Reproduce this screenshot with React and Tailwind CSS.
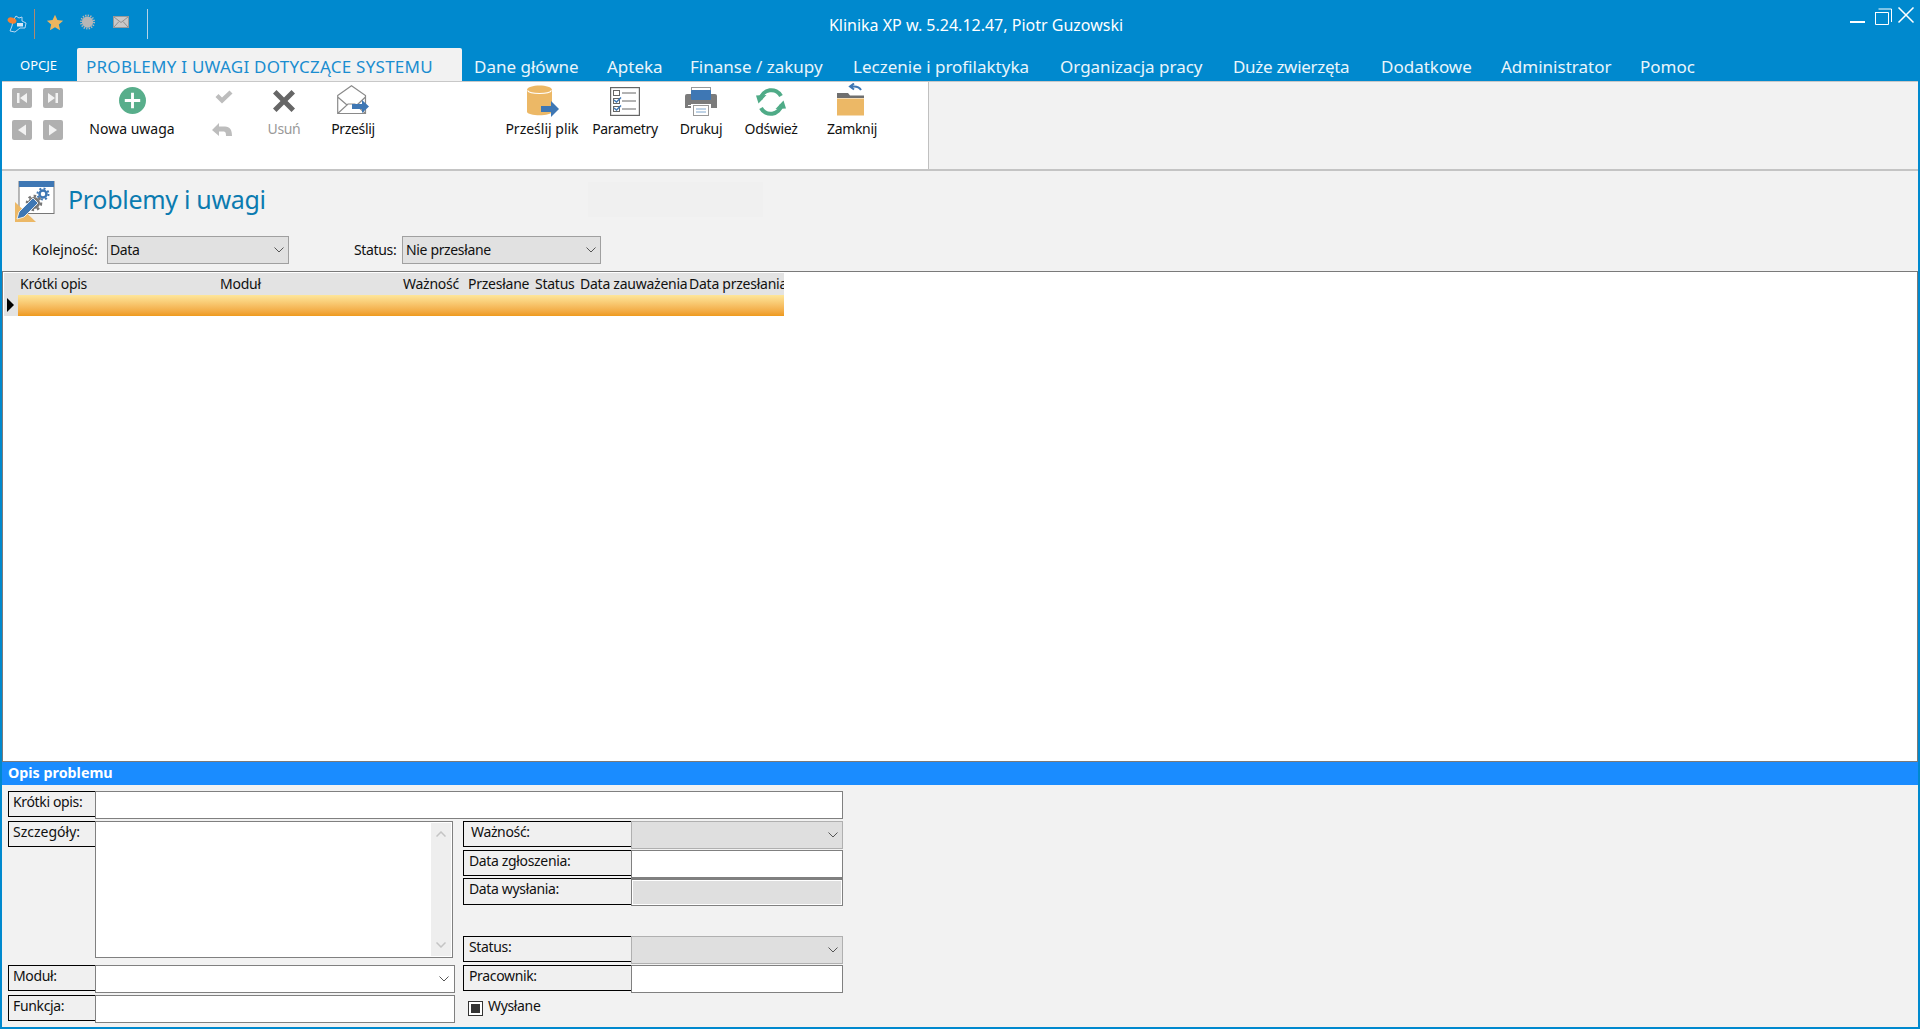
import React from "react";

const Chevron = ({ className = "" }) => (
  <svg viewBox="0 0 10 6" className={"w-[10px] h-[6px] " + className}>
    <path d="M0.5 0.5 L5 5 L9.5 0.5" fill="none" stroke="#555" strokeWidth="1" />
  </svg>
);

const Label = ({ className = "", children, w = "w-[88px]", pl = "pl-[4px]" }) => (
  <div className={"absolute h-[26px] border border-r-0 border-black bg-[#f0f0f0] text-[14px] leading-[20px] text-[#111] " + w + " " + pl + " " + className}>
    {children}
  </div>
);

const Box = ({ className = "" }) => <div className={"absolute h-[28px] border border-[#808080] bg-white " + className} />;

const NavSquare = ({ className = "", d }) => (
  <svg viewBox="0 0 20 20" className={"absolute w-[20px] h-[20px] " + className}>
    <rect width="20" height="20" rx="2" fill="#b0b0b0" />
    <path d={d} fill="#f2f2f2" />
  </svg>
);

const RibbonLabel = ({ left, gray, wide, children }) => (
  <span className={"absolute top-[37px] w-[100px] text-center text-[14px] leading-[20px] whitespace-nowrap " + left + " " + (gray ? "text-[#999]" : "text-[#111]") + (wide ? " tracking-[0px]" : "")}>
    {children}
  </span>
);

const menu = [
  ["Dane główne", "w-[133px]"],
  ["Apteka", "w-[83px]"],
  ["Finanse / zakupy", "w-[163px]"],
  ["Leczenie i profilaktyka", "w-[207px]"],
  ["Organizacja pracy", "w-[173px]"],
  ["Duże zwierzęta", "w-[148px] tracking-[-0.3px]"],
  ["Dodatkowe", "w-[120px]"],
  ["Administrator", "w-[139px]"],
  ["Pomoc", "w-[80px]"],
];

const columns = [
  ["Krótki opis", "w-[200px]"],
  ["Moduł", "w-[183px]"],
  ["Ważność", "w-[65px]"],
  ["Przesłane", "w-[67px]"],
  ["Status", "w-[45px]"],
  ["Data zauważenia", "w-[109px]"],
  ["Data przesłania", "w-[97px]"],
];

export default function App() {
  return (
    <div className="relative w-full h-screen overflow-hidden bg-[#0089ce] font-['Noto_Sans',sans-serif] tracking-[-0.35px]">
      {/* pasek tytulu */}
      <svg viewBox="0 0 20 18" className="absolute left-[7px] top-[15px] w-[20px] h-[18px]">
        <path d="M6 6 L9 1 L12 3 L15 2 L15 6 L19 8 L18 13 L13 13 L8 17 L3 16 L5 11 Z" fill="none" stroke="#b9d7f2" strokeWidth="1" />
        <rect x="10" y="8" width="6" height="3.5" fill="#d9e9f8" />
        <ellipse cx="5" cy="5.5" rx="4.5" ry="3" fill="#f58233" transform="rotate(20 5 5.5)" />
      </svg>
      <div className="absolute left-[34px] top-[9px] w-px h-[30px] bg-[#b08a70]" />
      <svg viewBox="0 0 24 24" className="absolute left-[46px] top-[14px] w-[18px] h-[17px]">
        <path d="M12 1 L15.4 8.6 L23.5 9.4 L17.4 14.8 L19.2 23 L12 18.7 L4.8 23 L6.6 14.8 L0.5 9.4 L8.6 8.6 Z" fill="#ecb55e" />
      </svg>
      <svg viewBox="0 0 16 16" className="absolute left-[80px] top-[14px] w-[15px] h-[16px]">
        <circle cx="8" cy="8" r="6" fill="#b6b6b6" />
        <circle cx="8" cy="8" r="7" fill="none" stroke="#b6b6b6" strokeWidth="2" strokeDasharray="1.4 1.35" />
      </svg>
      <svg viewBox="0 0 16 12" className="absolute left-[113px] top-[16px] w-[16px] h-[12px]">
        <rect x=".5" y=".5" width="15" height="11" fill="#c8c8c8" stroke="#999" />
        <path d="M1 1 L8 6.5 L15 1 M1 11 L6 5.5 M15 11 L10 5.5" fill="none" stroke="#8f8f8f" />
      </svg>
      <div className="absolute left-[147px] top-[9px] w-px h-[30px] bg-[#b5d3e6]" />

      <div className="absolute left-[800px] top-[14px] w-[352px] text-center text-[16px] leading-[22px] tracking-[0px] text-white whitespace-nowrap">
        Klinika XP w. 5.24.12.47, Piotr Guzowski
      </div>

      <svg viewBox="0 0 66 18" className="absolute left-[1850px] top-[7px] w-[66px] h-[18px]">
        <rect x="0" y="14" width="15" height="2" fill="#fff" />
        <path d="M28.5 2 H41.5 V15 M25 5.5 H38.5 V17.5 H25.5 V5.5" fill="none" stroke="#fff" strokeWidth="1" />
        <path d="M48.5 0.5 L63.5 15.5 M63.5 0.5 L48.5 15.5" stroke="#fff" strokeWidth="1.5" />
      </svg>

      {/* zakladki */}
      <div className="absolute left-0 top-[48px] flex h-[33px] items-stretch text-white">
        <div className="w-[77px] pt-[6px] text-center text-[13px] leading-[22px] tracking-normal">OPCJE</div>
        <div className="w-[385px] rounded-t-[2px] bg-[#f2f2f2] pl-[9px] pt-[7px] text-[17px] leading-[24px] text-[#1a8dd0] whitespace-nowrap tracking-[0.25px]">
          PROBLEMY I UWAGI DOTYCZĄCE SYSTEMU
        </div>
        <div className="flex pl-[12px] pt-[7px] text-[17px] leading-[24px] tracking-[0px] text-[#eaf5fb]">
          {menu.map(([name, width]) => (
            <span key={name} className={width + " whitespace-nowrap"}>{name}</span>
          ))}
        </div>
      </div>

      {/* ribbon */}
      <div className="absolute left-[2px] right-[2px] top-[81px] h-[946px] bg-[#f2f2f2]">
        <div className="absolute left-0 top-0 right-0 h-px bg-[#c8c8c8]" />
      </div>
      <div className="absolute left-0 top-[82px] w-[928px] h-[87px]">
        <div className="absolute left-[2px] top-0 w-[926px] h-[87px] bg-white" />
        <NavSquare className="left-[12px] top-[6px]" d="M5 5 H7.5 V15 H5 Z M15 5 V15 L8 10 Z" />
        <NavSquare className="left-[43px] top-[6px]" d="M5 5 V15 L12 10 Z M12.5 5 H15 V15 H12.5 Z" />
        <NavSquare className="left-[12px] top-[38px]" d="M14 4.5 V15.5 L6 10 Z" />
        <NavSquare className="left-[43px] top-[38px]" d="M6 4.5 V15.5 L14 10 Z" />

        <svg viewBox="0 0 28 28" className="absolute left-[119px] top-[5px] w-[27px] h-[27px]">
          <circle cx="14" cy="14" r="14" fill="#58ae8b" />
          <path d="M12.5 6 H15.5 V12.5 H22 V15.5 H15.5 V22 H12.5 V15.5 H6 V12.5 H12.5 Z" fill="#fff" />
        </svg>
        <RibbonLabel left="left-[82px]" wide>Nowa uwaga</RibbonLabel>

        <svg viewBox="0 0 18 14" className="absolute left-[215px] top-[8px] w-[18px] h-[14px]">
          <path d="M0.5 7 L3.5 4 L7 7.5 L14.5 0.5 L17.5 3.5 L7 13.5 Z" fill="#bdbdbd" />
        </svg>
        <svg viewBox="0 0 20 14" className="absolute left-[212px] top-[40px] w-[20px] h-[14px]">
          <path d="M0 8 L7 1 V4.5 H13 C18 4.5 20 8 20 14 H14 C14 10.5 13.5 9.5 11 9.5 H7 V14 Z" fill="#bdbdbd" />
        </svg>
        <svg viewBox="0 0 22 22" className="absolute left-[273px] top-[8px] w-[22px] h-[22px]">
          <path d="M3.5 0 L11 7.5 L18.5 0 L22 3.5 L14.5 11 L22 18.5 L18.5 22 L11 14.5 L3.5 22 L0 18.5 L7.5 11 L0 3.5 Z" fill="#666" />
        </svg>
        <RibbonLabel left="left-[234px]" gray>Usuń</RibbonLabel>

        <svg viewBox="0 0 32 30" className="absolute left-[337px] top-[3px] w-[32px] h-[30px]">
          <path d="M0.7 10.5 L14.5 0.8 L28.5 10.5 V28.5 H0.7 Z M0.7 12 L10 20 M28.5 12 L20 20 M0.7 28.5 L11 19 H18 L28.5 28.5" fill="#fff" stroke="#8a8a8a" strokeWidth="1.2" />
          <path d="M15 19 H25 V15 L32 21.5 L25 28 V24 H15 Z" fill="#3e77b4" />
        </svg>
        <RibbonLabel left="left-[303px]">Prześlij</RibbonLabel>

        <svg viewBox="0 0 32 32" className="absolute left-[527px] top-[3px] w-[32px] h-[32px]">
          <path d="M0 5 C0 -1 25 -1 25 5 V26.5 C25 31.5 0 31.5 0 26.5 Z" fill="#ecb866" />
          <path d="M0.5 5.5 C3 9.5 22 9.5 24.5 5.5" fill="none" stroke="#fff" strokeWidth="1.2" />
          <path d="M14 21 H24 V16 L32 24 L24 32 V27 H14 Z" fill="#3e77b4" />
        </svg>
        <RibbonLabel left="left-[492px]" wide>Prześlij plik</RibbonLabel>

        <svg viewBox="0 0 30 29" className="absolute left-[610px] top-[5px] w-[30px] h-[29px]">
          <rect x=".6" y=".6" width="28.8" height="27.8" fill="#fff" stroke="#666" strokeWidth="1.2" />
          <rect x="3.5" y="3.5" width="6" height="5" fill="none" stroke="#666" />
          <rect x="3.5" y="11.5" width="6" height="5" fill="none" stroke="#666" />
          <rect x="3.5" y="19.5" width="6" height="5" fill="none" stroke="#666" />
          <path d="M4 13 L6.5 15 L11 10.5 M4 21 L6.5 23 L11 18.5" fill="none" stroke="#3e77b4" strokeWidth="1.5" />
          <path d="M12 6 H26 M12 14 H26 M12 22 H26" stroke="#666" strokeWidth="1" />
        </svg>
        <RibbonLabel left="left-[575px]">Parametry</RibbonLabel>

        <svg viewBox="0 0 32 29" className="absolute left-[685px] top-[5px] w-[32px] h-[29px]">
          <rect x="6.5" y=".5" width="19" height="10" fill="#fff" stroke="#999" />
          <path d="M2 7 H30 Q32 7 32 9 V21 H26 V17 H6 V21 H0 V9 Q0 7 2 7 Z" fill="#7b7b7b" />
          <rect x="6" y="3" width="20" height="10" rx="1" fill="#3e77b4" />
          <rect x="3" y="18" width="3" height="1" fill="#fff" />
          <rect x="8.5" y="18.5" width="15" height="10" fill="#fff" stroke="#999" />
          <path d="M11 22 H21 M11 25 H21" stroke="#7fa6cc" />
        </svg>
        <RibbonLabel left="left-[651px]">Drukuj</RibbonLabel>

        <svg viewBox="0 0 30 28" className="absolute left-[756px] top-[6px] w-[30px] h-[28px]">
          <path d="M4.5 11 A11 11 0 0 1 25 8 M25.5 17 A11 11 0 0 1 5 20" fill="none" stroke="#4fab87" strokeWidth="4" />
          <path d="M0 7.5 L10.5 7 L2.5 15.5 Z M30 20.5 L19.5 21 L27.5 12.5 Z" fill="#4fab87" />
        </svg>
        <RibbonLabel left="left-[721px]">Odśwież</RibbonLabel>

        <svg viewBox="0 0 30 33" className="absolute left-[837px] top-[1px] w-[30px] h-[33px]">
          <path d="M0 10 H11 L13 12.5 H27 V15 H0 Z" fill="#6f6f6f" />
          <rect x="0" y="15.5" width="27" height="17" fill="#ecb866" />
          <path d="M24 7 Q22 3.5 17 3.5 H13 M17 0.5 L13 3.5 L17 6.5" fill="none" stroke="#3e77b4" strokeWidth="2" />
        </svg>
        <RibbonLabel left="left-[802px]">Zamknij</RibbonLabel>
      </div>
      <div className="absolute left-[928px] top-[82px] w-px h-[87px] bg-[#c0c0c0]" />
      <div className="absolute left-[2px] right-[2px] top-[169px] h-[2px] bg-[#c4c4c4]" />

      {/* naglowek */}
      <svg viewBox="0 0 40 41" className="absolute left-[15px] top-[181px] w-[40px] h-[41px]">
        <rect x="4" y="0.5" width="35" height="32" fill="#fff" stroke="#777" strokeWidth="1" />
        <rect x="4" y="0" width="35" height="6" fill="#3e77b4" />
        <circle cx="28" cy="13" r="3.5" fill="none" stroke="#3e77b4" strokeWidth="2.5" />
        <circle cx="28" cy="13" r="5.5" fill="none" stroke="#3e77b4" strokeWidth="2" strokeDasharray="2 2.3" />
        <circle cx="19" cy="22" r="4.5" fill="none" stroke="#777" strokeWidth="3" />
        <circle cx="19" cy="22" r="7" fill="none" stroke="#777" strokeWidth="2.5" strokeDasharray="2.5 2.9" />
        <path d="M0 21 L21 41 H0 Z" fill="#ecb866" />
        <path d="M2 38 L4 31 L18 17 L23 22 L9 36 Z" fill="#3e77b4" stroke="#fff" strokeWidth=".8" />
      </svg>
      <div className="absolute left-[68px] top-[182px] text-[25px] leading-[34px] text-[#0b7bb0] tracking-[-0.3px]">Problemy i uwagi</div>
      <div className="absolute left-[588px] top-[182px] w-[175px] h-[35px] bg-[#f0f0f0]" />

      {/* filtry */}
      <span className="absolute left-[32px] top-[240px] text-[14px] leading-[20px] tracking-[-0.1px] text-[#111]">Kolejność:</span>
      <div className="absolute left-[107px] top-[236px] flex h-[28px] w-[182px] items-center justify-between border border-[#a0a0a0] bg-[#e1e1e1] pb-px pl-[2px] pr-[4px] text-[14px] text-[#111]">
        <span>Data</span>
        <Chevron />
      </div>
      <span className="absolute left-[354px] top-[240px] text-[14px] leading-[20px] text-[#111]">Status:</span>
      <div className="absolute left-[402px] top-[236px] flex h-[28px] w-[199px] items-center justify-between border border-[#a0a0a0] bg-[#e1e1e1] pb-px pl-[3px] pr-[4px] text-[14px] text-[#111]">
        <span>Nie przesłane</span>
        <Chevron />
      </div>

      {/* tabela */}
      <div className="absolute left-[2px] right-[2px] top-[271px] h-[491px] border border-[#7a7a7a] bg-white">
        <div className="ml-px mt-px flex h-[22px] w-[780px] bg-[#e3e3e3] pl-[14px] pt-px text-[14px] leading-[20px] tracking-[-0.25px] text-[#111]">
          {columns.map(([name, width]) => (
            <div key={name} className={width + " overflow-hidden whitespace-nowrap pl-[2px]"}>{name}</div>
          ))}
        </div>
        <div className="ml-px flex h-[21px] w-[780px] bg-[#e3e3e3]">
          <div className="flex w-[14px] items-center pb-px pl-[3px]">
            <div className="h-0 w-0 border-y-[7px] border-l-[7px] border-y-transparent border-l-black" />
          </div>
          <div className="flex-1 bg-gradient-to-b from-[#fde69a] to-[#ee9a1b]" />
        </div>
      </div>

      {/* opis problemu */}
      <div className="absolute left-[2px] right-[2px] top-[762px] h-[23px] bg-[#1a8cff] pl-[6px] text-[14.3px] font-bold leading-[21px] tracking-normal text-white">
        Opis problemu
      </div>

      <Label className="left-[8px] top-[791px]">Krótki opis:</Label>
      <Box className="left-[95px] top-[791px] w-[748px]" />

      <Label className="left-[8px] top-[821px]"><span className="tracking-[0px]">Szczegóły:</span></Label>
      <div className="absolute left-[95px] top-[821px] h-[137px] w-[358px] border border-[#808080] bg-white">
        <div className="absolute right-px top-px flex h-[133px] w-[20px] flex-col items-center justify-between bg-[#eeeeee] py-[8px]">
          <svg viewBox="0 0 10 6" className="w-[10px] h-[6px]"><path d="M0.5 5.5 L5 1 L9.5 5.5" fill="none" stroke="#c4c4c4" strokeWidth="1.5" /></svg>
          <svg viewBox="0 0 10 6" className="w-[10px] h-[6px]"><path d="M0.5 0.5 L5 5 L9.5 0.5" fill="none" stroke="#c4c4c4" strokeWidth="1.5" /></svg>
        </div>
      </div>

      <Label className="left-[8px] top-[965px]">Moduł:</Label>
      <Box className="left-[95px] top-[965px] w-[360px]" />
      <Chevron className="absolute left-[439px] top-[976px]" />

      <Label className="left-[8px] top-[995px]">Funkcja:</Label>
      <Box className="left-[95px] top-[995px] w-[360px]" />

      <Label className="left-[463px] top-[821px]" w="w-[168px]" pl="pl-[7px]">Ważność:</Label>
      <div className="absolute left-[631px] top-[821px] flex h-[28px] w-[212px] items-center justify-end border border-[#b0b0b0] bg-[#dfdfdf] pr-[4px]">
        <Chevron />
      </div>

      <Label className="left-[463px] top-[850px]" w="w-[168px]" pl="pl-[5px]">Data zgłoszenia:</Label>
      <Box className="left-[631px] top-[850px] w-[212px]" />

      <Label className="left-[463px] top-[878px] h-[27px]" w="w-[168px]" pl="pl-[5px]">Data wysłania:</Label>
      <div className="absolute left-[631px] top-[878px] h-[28px] w-[212px] border border-t-2 border-[#808080] bg-white p-px">
        <div className="h-full bg-[#dfdfdf]" />
      </div>

      <Label className="left-[463px] top-[936px]" w="w-[168px]" pl="pl-[5px]">Status:</Label>
      <div className="absolute left-[631px] top-[936px] flex h-[28px] w-[212px] items-center justify-end border border-[#b0b0b0] bg-[#dfdfdf] pr-[4px]">
        <Chevron />
      </div>

      <Label className="left-[463px] top-[965px]" w="w-[168px]" pl="pl-[5px]">Pracownik:</Label>
      <Box className="left-[631px] top-[965px] w-[212px]" />

      <div className="absolute left-[468px] top-[1001px] flex h-[15px] w-[15px] items-center justify-center border border-[#333] bg-white">
        <div className="h-[9px] w-[9px] bg-[#333]" />
      </div>
      <span className="absolute left-[488px] top-[996px] text-[14px] leading-[20px] text-[#111]">Wysłane</span>
    </div>
  );
}
